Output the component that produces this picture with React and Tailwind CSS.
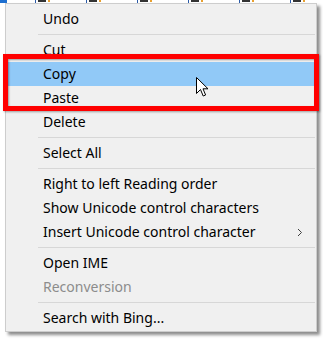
import React from "react";

const items = [
  { label: "Undo" },
  "sep",
  { label: "Cut" },
  { label: "Copy", active: true },
  { label: "Paste" },
  { label: "Delete" },
  "sep",
  { label: "Select All" },
  "sep",
  { label: "Right to left Reading order" },
  { label: "Show Unicode control characters" },
  { label: "Insert Unicode control character", submenu: true },
  "sep",
  { label: "Open IME" },
  { label: "Reconversion", disabled: true },
  "sep",
  { label: "Search with Bing..." },
];

const Cursor = () => (
  <svg
    className="absolute left-[196px] top-[77px]"
    width="13"
    height="21"
    viewBox="0 0 13 21"
  >
    <path
      d="M0.5 0.5 L0.5 16.5 L4.5 12.5 L7.2 19 L9.6 18 L7 11.8 L12 11.8 Z"
      fill="#fff"
      stroke="#000"
      strokeWidth="1"
      strokeLinejoin="miter"
    />
  </svg>
);

const MenuRow = ({ item }) => {
  if (item === "sep") {
    return (
      <div className="h-[7px] flex items-center">
        <div className="ml-[32px] mr-[1px] h-px flex-1 bg-[#d7d7d7]" />
      </div>
    );
  }
  return (
    <div
      className={`h-[24px] mx-[2px] pl-[35px] pr-[10px] flex items-center justify-between ${
        item.active ? "bg-[#91c9f7]" : ""
      }`}
    >
      <span className={item.disabled ? "text-[#8c8c8c]" : "text-black"}>
        {item.label}
      </span>
      {item.submenu && (
        <svg width="6" height="9" viewBox="0 0 6 9" className="mr-[1px]">
          <path d="M1 1 L4.5 4.5 L1 8" fill="none" stroke="#404040" strokeWidth="1" />
        </svg>
      )}
    </div>
  );
};

export default function App() {
  return (
    <div
      className="relative w-[323px] h-[339px] bg-white overflow-hidden text-[14px] leading-none"
      style={{ fontFamily: '"Noto Sans", "Open Sans", sans-serif' }}
    >
      {/* sheet behind the menu */}
      <div className="h-[3px] flex">
        <div className="w-[7px] bg-[#1e6fd0]" />
        <div className="flex-1 flex justify-around items-start pl-[10px]">
          {[0, 1, 2, 3, 4, 5].map((i) => (
            <div key={i} className="flex gap-[2px]">
              <div className="w-px h-[3px] bg-[#2a5aa8]" />
              <div className="w-[8px] h-[2px] bg-[#333]" />
              <div className="w-[2px] h-[2px] bg-[#e8a030]" />
            </div>
          ))}
        </div>
      </div>

      <div className="ml-[5px] w-[312px] border border-[#cdcdcd] bg-[#f0f0f0] pt-[3px] pb-[1px] shadow-[3px_3px_3px_rgba(0,0,0,0.45)]">
        {items.map((item, i) => (
          <MenuRow key={i} item={item} />
        ))}
      </div>

      {/* annotation */}
      <div className="absolute left-[3px] top-[54px] w-[316px] h-[57px] border-[5px] border-[#ff0000] shadow-[1px_1px_2px_rgba(0,0,0,0.35),inset_1px_1px_2px_rgba(0,0,0,0.35)]" />

      <Cursor />
    </div>
  );
}
